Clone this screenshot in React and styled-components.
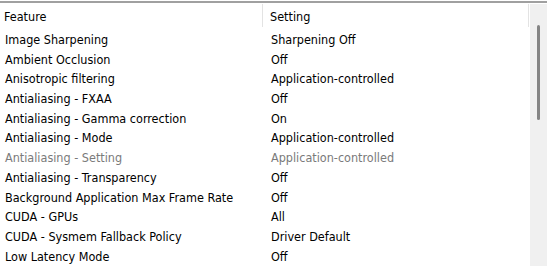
import React from "react";
import styled, { createGlobalStyle } from "styled-components";

const Global = createGlobalStyle`
  html, body { margin: 0; padding: 0; background: #fff; }
  body { font-family: "DejaVu Sans Condensed", "DejaVu Sans", Tahoma, sans-serif; }
`;

const Frame = styled.div`
  width: 547px;
  height: 268px;
  overflow: hidden;
  padding-top: 1px;
  box-sizing: border-box;
`;

const Box = styled.div`
  border-top: 2px solid #a0a0a0;
  padding-top: 1px;
  display: grid;
  grid-template-columns: 530px 17px;
  height: 265px;
  box-sizing: border-box;
`;

const List = styled.div`
  display: flex;
  flex-direction: column;
  overflow: hidden;
`;

const Header = styled.div`
  display: grid;
  grid-template-columns: 263px 266px;
  height: 26px;
  align-items: start;
`;

const HeadCell = styled.div`
  display: flex;
  align-items: center;
  box-sizing: border-box;
  padding-left: ${(p) => p.$pad}px;
  padding-top: 2px;
  border-right: 1px solid #e3e3e3;
  font-size: 12.5px;
  color: #000;
  height: 23px;
`;

const Row = styled.div`
  display: grid;
  grid-template-columns: 263px 266px;
  height: 20px;
  align-items: center;
  font-size: 12.5px;
  color: ${(p) => (p.$disabled ? "#7a7a7a" : "#000")};
  white-space: nowrap;
`;

const Cell = styled.div`
  padding-left: ${(p) => p.$pad}px;
`;

const Scroll = styled.div`
  background: #f0f0f0;
  display: flex;
  justify-content: center;
  padding-top: 21px;
`;

const Thumb = styled.div`
  width: 3px;
  height: 95px;
  background: #858585;
  border-radius: 2px;
`;

const rows = [
  ["Image Sharpening", "Sharpening Off"],
  ["Ambient Occlusion", "Off"],
  ["Anisotropic filtering", "Application-controlled"],
  ["Antialiasing - FXAA", "Off"],
  ["Antialiasing - Gamma correction", "On"],
  ["Antialiasing - Mode", "Application-controlled"],
  ["Antialiasing - Setting", "Application-controlled", true],
  ["Antialiasing - Transparency", "Off"],
  ["Background Application Max Frame Rate", "Off"],
  ["CUDA - GPUs", "All"],
  ["CUDA - Sysmem Fallback Policy", "Driver Default"],
  ["Low Latency Mode", "Off"],
];

export default function App() {
  return (
    <>
      <Global />
      <Frame>
        <Box>
          <List>
            <Header>
              <HeadCell $pad={4}>Feature</HeadCell>
              <HeadCell $pad={7}>Setting</HeadCell>
            </Header>
            {rows.map(([f, s, d]) => (
              <Row key={f} $disabled={d}>
                <Cell $pad={5}>{f}</Cell>
                <Cell $pad={8}>{s}</Cell>
              </Row>
            ))}
          </List>
          <Scroll>
            <Thumb />
          </Scroll>
        </Box>
      </Frame>
    </>
  );
}
